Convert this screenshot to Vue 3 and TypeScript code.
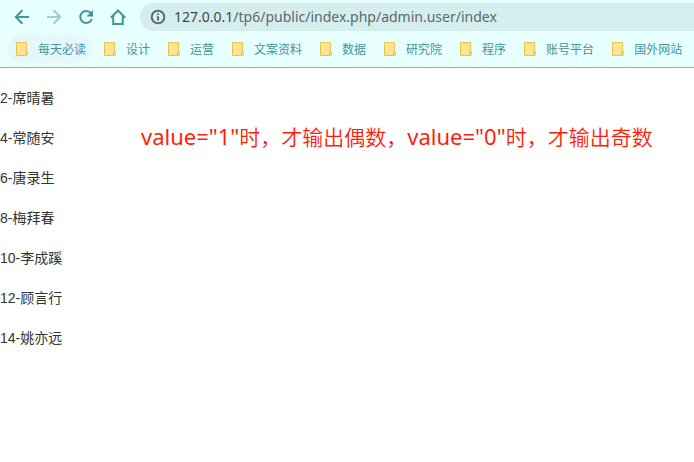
<script setup lang="ts">
interface User {
  id: number
  name: string
}

const folders: string[] = ['每天必读', '设计', '运营', '文案资料', '数据', '研究院', '程序', '账号平台', '国外网站']

const users: User[] = [
  { id: 2, name: '席晴暑' },
  { id: 4, name: '常随安' },
  { id: 6, name: '唐录生' },
  { id: 8, name: '梅拜春' },
  { id: 10, name: '李成蹊' },
  { id: 12, name: '顾言行' },
  { id: 14, name: '姚亦远' },
]

const host = '127.0.0.1'
const path = '/tp6/public/index.php/admin.user/index'
</script>

<template>
  <div class="browser">
    <header class="chrome">
      <div class="toolbar">
        <nav class="controls" aria-label="导航">
          <button type="button" aria-label="后退">
            <svg viewBox="0 0 16 16"><path d="M15 8H2M8.4 1.3L1.8 8l6.6 6.7" /></svg>
          </button>
          <button type="button" aria-label="前进" class="dim">
            <svg viewBox="0 0 16 16"><path d="M1 8h13M7.6 1.3L14.2 8l-6.6 6.7" /></svg>
          </button>
          <button type="button" aria-label="刷新">
            <svg viewBox="0 0 16 16">
              <path d="M13 4.2A6 6 0 1 0 13.9 10" />
              <path class="solid" d="M15 1v6.6H8.4z" />
            </svg>
          </button>
          <button type="button" aria-label="主页">
            <svg viewBox="0 0 16 16"><path d="M.8 8.7L8 1.5l7.2 7.2M3.2 7v8h9.6V7" /></svg>
          </button>
        </nav>
        <div class="address">
          <svg class="info" viewBox="0 0 16 16">
            <circle cx="8" cy="8" r="6.3" />
            <path d="M8 7.2v4.2M8 4.4v1.7" />
          </svg>
          <span class="url"><span class="host">{{ host }}</span>{{ path }}</span>
        </div>
      </div>
      <nav class="bookmarks" aria-label="书签">
        <button v-for="(folder, i) in folders" :key="folder" type="button" :class="{ active: i === 0 }">
          <svg class="folder" viewBox="0 0 12 14">
            <path class="sheet" d="M.5.5h10v13H.5z" />
            <path class="tab" d="M9.5 9.5h2v3.5l-.5.5H9.5z" />
          </svg>
          {{ folder }}
        </button>
      </nav>
    </header>
    <main class="content">
      <ul class="users">
        <li v-for="user in users" :key="user.id">{{ user.id }}-{{ user.name }}</li>
      </ul>
      <p class="note"><span class="code">value="1"</span>时，才输出偶数，<span class="code">value="0"</span>时，才输出奇数</p>
    </main>
  </div>
</template>

<style>
body {
  background: #fff;
}
</style>

<style scoped>
.browser {
  font-family: "Noto Sans CJK SC", sans-serif;
}

.chrome {
  background: #e8ffff;
  border-bottom: 1px solid #9eafb1;
  overflow: hidden;
}

.toolbar {
  display: flex;
  align-items: center;
  gap: 14px;
  height: 28px;
  padding: 3px 0 4px 14px;
}

.controls {
  display: flex;
  flex: none;
  gap: 16px;
}

button {
  display: flex;
  align-items: center;
  border: 0;
  padding: 0;
  background: none;
  color: #43959a;
  font: inherit;
  cursor: pointer;
}

.controls svg {
  display: block;
  width: 16px;
  height: 16px;
  fill: none;
  stroke: currentColor;
  stroke-width: 2;
}

.controls .solid {
  fill: currentColor;
  stroke: none;
}

.controls .dim {
  color: #9dcdd0;
}

.address {
  display: flex;
  flex: 1;
  align-items: center;
  gap: 8px;
  min-width: 0;
  height: 28px;
  padding-left: 10px;
  border-radius: 14px 0 0 14px;
  background: #d4eeee;
}

.info {
  flex: none;
  width: 16px;
  height: 16px;
  fill: none;
  stroke: #5c686c;
  stroke-width: 2;
}

.url {
  font-family: "Noto Sans", "Open Sans", sans-serif;
  font-size: 14px;
  line-height: 28px;
  color: #5d686b;
  white-space: nowrap;
}

.host {
  color: #3f4648;
}

.bookmarks {
  display: flex;
  gap: 4px;
  padding: 0 8px 4px;
}

.bookmarks button {
  flex: none;
  gap: 10px;
  height: 28px;
  padding: 0 6px 0 8px;
  border-radius: 14px;
  font-size: 12px;
  line-height: 28px;
  white-space: nowrap;
}

.bookmarks .active {
  background: #e4f7fa;
}

.folder {
  width: 12px;
  height: 14px;
}

.sheet {
  fill: #ffe591;
  stroke: #ebc443;
}

.tab {
  fill: #ffe591;
  stroke: #ebc443;
}

.content {
  display: flex;
  align-items: flex-start;
  padding-top: 10px;
}

.users {
  flex: none;
  width: 141px;
  margin: 0;
  padding: 0;
  list-style: none;
  font-family: "Liberation Sans", "Noto Sans CJK SC", sans-serif;
  font-size: 14px;
  line-height: 40px;
  color: #333;
}

.note {
  margin: 38px 0 0;
  font-size: 21px;
  font-weight: 350;
  line-height: 40px;
  color: #ff1e0a;
  white-space: nowrap;
}

.code {
  font-family: "Noto Sans", "Open Sans", sans-serif;
  font-size: 22px;
  font-weight: 400;
}
</style>
